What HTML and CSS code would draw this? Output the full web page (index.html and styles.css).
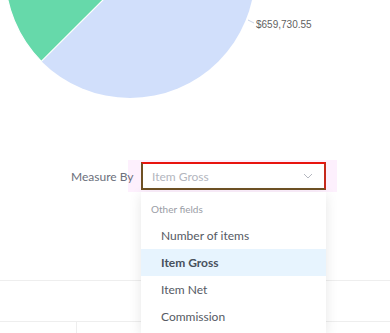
FILE: index.html
```html
<!DOCTYPE html>
<html lang="en">
  <head>
    <meta charset="UTF-8" />
    <meta name="viewport" content="width=device-width, initial-scale=1.0" />
    <title>Measure By</title>
    <link rel="stylesheet" href="styles.css">
  </head>
  <body>
    <div class="chart">
      <svg width="390" height="150" viewBox="0 0 390 150">
        <circle cx="130" cy="-27" r="125" fill="#d1dffb" />
        <path d="M130 -27 L41.3 61.4 A125 125 0 0 1 5 -27 Z" fill="#66d9aa" stroke="#ffffff" stroke-width="1.2" />
        <polyline points="248,20 254,23" fill="none" stroke="#c9d3e6" stroke-width="1" />
        <text x="256" y="28" class="pie-label">$659,730.55</text>
      </svg>
    </div>

    <div class="measure">
      <span class="measure-label">Measure By</span>
      <div class="select-wrap">
        <div class="select">
          <span class="select-value">Item Gross</span>
          <svg class="chevron" width="10" height="6" viewBox="0 0 10 6">
            <polyline points="1,1 5,5 9,1" fill="none" stroke="#b5b8c0" stroke-width="1" />
          </svg>
          <div class="dropdown">
            <div class="group-title">Other fields</div>
            <div class="option">Number of items</div>
            <div class="option selected">Item Gross</div>
            <div class="option">Item Net</div>
            <div class="option">Commission</div>
          </div>
        </div>
      </div>
    </div>

    <div class="table">
      <div class="row"></div>
      <div class="row last">
        <div class="cell first"></div>
        <div class="cell"></div>
      </div>
    </div>
  </body>
</html>
```

FILE: styles.css
```css
* {
  margin: 0;
  padding: 0;
  box-sizing: border-box;
}

body {
  width: 390px;
  height: 333px;
  overflow: hidden;
  background-color: #ffffff;
  font-family: Lato, "Open Sans", sans-serif;
}

.chart {
  height: 160px;
}

.chart svg {
  display: block;
}

.pie-label {
  font-family: "Liberation Sans", Arial, sans-serif;
  font-size: 10px;
  fill: #5f5f5f;
}

.measure {
  display: flex;
  align-items: center;
  padding-left: 71px;
}

.measure-label {
  position: relative;
  width: 57px;
  font-size: 12px;
  color: #6b6f7b;
  white-space: nowrap;
}

.select-wrap {
  padding: 2px 11px 2px 13px;
  background-color: #fdf0fd;
}

.select {
  position: relative;
  display: flex;
  align-items: center;
  justify-content: space-between;
  width: 185px;
  height: 28px;
  padding: 0 11px 0 9px;
  background-color: #ffffff;
  border-top: 2px solid #e8140f;
  border-right: 2px solid #c6281c;
  border-left: 2px solid #6e5124;
  border-bottom: 2px solid #6e5124;
}

.select-value {
  font-size: 12px;
  color: #b3b6be;
}

.dropdown {
  position: absolute;
  top: 28px;
  left: -2px;
  width: 185px;
  padding-bottom: 3px;
  background-color: #ffffff;
  box-shadow: rgba(0, 0, 0, 0.1) 0px 3px 12px;
  z-index: 2;
}

.group-title {
  padding: 10px 10px 6px;
  height: 30px;
  font-size: 10px;
  line-height: 14px;
  color: #9a9da6;
}

.option {
  height: 27px;
  line-height: 27px;
  padding-left: 20px;
  font-size: 12px;
  color: #555a64;
}

.option.selected {
  background-color: #e7f4fe;
  font-weight: bold;
  color: #48505c;
}

.table {
  margin-top: 88px;
}

.row {
  display: flex;
  height: 41px;
  border-top: 1px solid #eeeeee;
}

.row.last {
  height: 12px;
}

.cell {
  flex-grow: 1;
}

.cell.first {
  flex-grow: 0;
  width: 77px;
  border-right: 1px solid #eeeeee;
}
```
